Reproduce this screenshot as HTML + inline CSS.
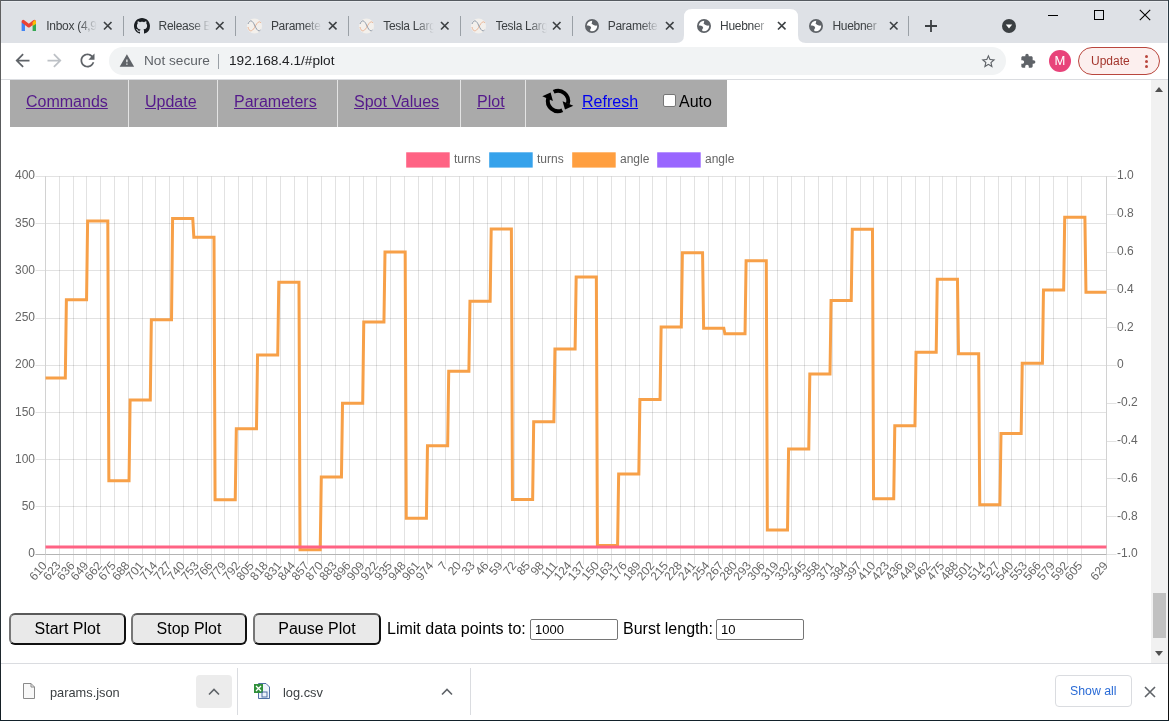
<!DOCTYPE html>
<html><head><meta charset="utf-8">
<style>
html,body{margin:0;padding:0;width:1169px;height:721px;overflow:hidden;background:#fff;}
body{position:relative;font-family:"Liberation Sans",sans-serif;}
.a{position:absolute;}
.tabstrip{left:0;top:0;width:1169px;height:43px;background:#dee1e6;}
.sep{position:absolute;width:1px;background:#9aa0a6;top:16px;height:20px;}
.ttl{position:absolute;top:18px;font-size:12px;letter-spacing:-0.3px;line-height:16px;color:#3c4043;white-space:nowrap;overflow:hidden;}
.ttl span{position:absolute;right:0;top:0;width:18px;height:16px;background:linear-gradient(to right,rgba(222,225,230,0),#dee1e6);}
.x{position:absolute;top:22px;width:9px;height:9px;}
.toolbar{left:0;top:43px;width:1169px;height:36px;background:#fff;}
.omni{left:109px;top:47px;width:897px;height:28px;border-radius:14px;background:#f1f3f4;}
.nav{left:10px;top:80px;width:717px;height:47px;background:#aaaaaa;}
.nav a{position:absolute;top:93px;font-size:16px;line-height:18px;color:#551a8b;text-decoration:underline;white-space:nowrap;}
.nsep{position:absolute;top:80px;height:47px;width:1px;background:#e4e4e4;}
.legtxt{position:absolute;top:152px;font-size:12px;line-height:14px;color:#666;}
.btn{position:absolute;top:613px;height:28px;border:2px solid;border-color:#5a5a5a #111 #111 #777;border-radius:6px;background:#e9e9e9;font-size:16px;line-height:28px;text-align:center;color:#000;box-sizing:content-box;}
.lbl{position:absolute;top:620px;font-size:16px;line-height:18px;color:#000;white-space:nowrap;}
.inp{position:absolute;top:619px;height:19px;border:1px solid #767676;border-radius:2px;background:#fff;font-size:13px;line-height:19px;color:#000;padding-left:4px;box-sizing:content-box;}
.dl{left:0;top:663px;width:1169px;height:57px;background:#fff;border-top:1px solid #dadce0;box-sizing:border-box;}
</style></head><body><div id="wrap" style="position:absolute;left:0;top:0;width:1169px;height:721px;will-change:transform">
<!-- tab strip -->
<div class="a tabstrip"></div>
<!-- active tab -->
<svg class="a" style="left:671px;top:0" width="140" height="44">
<path d="M5 43 Q13 43 13 35 V17 Q13 9 21 9 H119 Q127 9 127 17 V35 Q127 43 135 43 Z" fill="#fff"/>
</svg>
<svg class="a" style="left:21px;top:18px" width="16" height="16" viewBox="0 0 16 16">
<path d="M0.6 4.2 H4 V13 H0.6 Z" fill="#4285f4"/>
<path d="M11.6 4.2 H15 V13 H11.6 Z" fill="#34a853"/>
<path d="M2.3 3.6 L7.8 7.9 L13.3 3.6" stroke="#ea4335" stroke-width="3.3" fill="none" stroke-linejoin="round" stroke-linecap="round"/>
<path d="M11.6 4.4 L13.2 2.2 Q15 2 15 3.8 V6 L11.6 8 Z" fill="#fbbc04"/>
</svg>
<div class="ttl" style="left:46.3px;width:51px">Inbox (4,9<span></span></div>
<svg class="a" style="left:103.1px;top:21.0px" width="9.5" height="9.5"><path d="M1 1 L8.5 8.5 M8.5 1 L1 8.5" stroke="#3c4043" stroke-width="1.65"/></svg>
<div class="sep" style="left:122.9px"></div>
<svg class="a" style="left:134.0px;top:17.8px" width="16" height="16" viewBox="0 0 16 16"><path fill="#1b1f23" d="M8 0C3.58 0 0 3.58 0 8c0 3.54 2.29 6.53 5.47 7.59.4.07.55-.17.55-.38 0-.19-.01-.82-.01-1.49-2.01.37-2.53-.49-2.69-.94-.09-.23-.48-.94-.82-1.13-.28-.15-.68-.52-.01-.53.63-.01 1.08.58 1.23.82.72 1.21 1.870.87 2.33.66.07-.52.28-.87.51-1.07-1.78-.2-3.64-.89-3.64-3.95 0-.87.31-1.59.82-2.15-.08-.2-.36-1.02.08-2.12 0 0 .67-.21 2.2.82.64-.18 1.32-.27 2-.27.68 0 1.36.09 2 .27 1.530-1.04 2.2-.82 2.2-.82.44 1.1.16 1.92.08 2.12.51.56.82 1.27.82 2.15 0 3.07-1.870 3.75-3.65 3.95.29.25.54.73.54 1.48 0 1.07-.01 1.93-.01 2.2 0 .21.15.46.55.38A8.013 8.013 0 0016 8c0-4.42-3.58-8-8-8z"/></svg>
<div class="ttl" style="left:158.6px;width:51px">Release B<span></span></div>
<svg class="a" style="left:215.4px;top:21.0px" width="9.5" height="9.5"><path d="M1 1 L8.5 8.5 M8.5 1 L1 8.5" stroke="#3c4043" stroke-width="1.65"/></svg>
<div class="sep" style="left:235.2px"></div>
<svg class="a" style="left:245.5px;top:17.8px" width="17" height="16" viewBox="0 0 17 16">
<circle cx="8.5" cy="8" r="7.6" fill="#f3f0ec"/>
<path d="M2 9 C3 14 6 14 8.5 9.5 S13 2 15 5" stroke="#e9b08e" stroke-width="0.9" fill="none"/>
<path d="M2 6 C4 1 6.5 2.5 8.5 7 S12.5 14.5 14.5 12" stroke="#8592a3" stroke-width="0.9" fill="none"/>
</svg>
<div class="ttl" style="left:270.9px;width:51px">Paramete<span></span></div>
<svg class="a" style="left:327.7px;top:21.0px" width="9.5" height="9.5"><path d="M1 1 L8.5 8.5 M8.5 1 L1 8.5" stroke="#3c4043" stroke-width="1.65"/></svg>
<div class="sep" style="left:347.5px"></div>
<svg class="a" style="left:357.8px;top:17.8px" width="17" height="16" viewBox="0 0 17 16">
<circle cx="8.5" cy="8" r="7.6" fill="#f3f0ec"/>
<path d="M2 9 C3 14 6 14 8.5 9.5 S13 2 15 5" stroke="#e9b08e" stroke-width="0.9" fill="none"/>
<path d="M2 6 C4 1 6.5 2.5 8.5 7 S12.5 14.5 14.5 12" stroke="#8592a3" stroke-width="0.9" fill="none"/>
</svg>
<div class="ttl" style="left:383.2px;width:51px">Tesla Larg<span></span></div>
<svg class="a" style="left:440.0px;top:21.0px" width="9.5" height="9.5"><path d="M1 1 L8.5 8.5 M8.5 1 L1 8.5" stroke="#3c4043" stroke-width="1.65"/></svg>
<div class="sep" style="left:459.8px"></div>
<svg class="a" style="left:470.1px;top:17.8px" width="17" height="16" viewBox="0 0 17 16">
<circle cx="8.5" cy="8" r="7.6" fill="#f3f0ec"/>
<path d="M2 9 C3 14 6 14 8.5 9.5 S13 2 15 5" stroke="#e9b08e" stroke-width="0.9" fill="none"/>
<path d="M2 6 C4 1 6.5 2.5 8.5 7 S12.5 14.5 14.5 12" stroke="#8592a3" stroke-width="0.9" fill="none"/>
</svg>
<div class="ttl" style="left:495.5px;width:51px">Tesla Larg<span></span></div>
<svg class="a" style="left:552.3px;top:21.0px" width="9.5" height="9.5"><path d="M1 1 L8.5 8.5 M8.5 1 L1 8.5" stroke="#3c4043" stroke-width="1.65"/></svg>
<div class="sep" style="left:572.1px"></div>
<svg class="a" style="left:584.6px;top:19px" width="14" height="14" viewBox="0 0 14 14">
<circle cx="7" cy="7" r="6.1" stroke="#5f6368" stroke-width="1.8" fill="#fff"/>
<path d="M6.6 1.5 C7.8 2.4 6.8 3.8 6.5 4.6 C7.4 5.6 8.6 6.3 9.8 6.6 C11 6.9 11.8 6.6 12.6 6.2 L12.2 3.6 L9.5 1.4 Z" fill="#5f6368"/>
<path d="M1.4 6.8 C2.4 6.2 4.3 6.4 5.3 7.2 C6.2 8 6.6 9.2 5.6 9.8 C4.9 10.3 5.2 11.6 5.6 12.6 L3.2 11.6 L1.4 9.2 Z" fill="#5f6368"/>
</svg>
<div class="ttl" style="left:607.8px;width:51px">Paramete<span></span></div>
<svg class="a" style="left:664.6px;top:21.0px" width="9.5" height="9.5"><path d="M1 1 L8.5 8.5 M8.5 1 L1 8.5" stroke="#3c4043" stroke-width="1.65"/></svg>
<svg class="a" style="left:696.9px;top:19px" width="14" height="14" viewBox="0 0 14 14">
<circle cx="7" cy="7" r="6.1" stroke="#5f6368" stroke-width="1.8" fill="#fff"/>
<path d="M6.6 1.5 C7.8 2.4 6.8 3.8 6.5 4.6 C7.4 5.6 8.6 6.3 9.8 6.6 C11 6.9 11.8 6.6 12.6 6.2 L12.2 3.6 L9.5 1.4 Z" fill="#5f6368"/>
<path d="M1.4 6.8 C2.4 6.2 4.3 6.4 5.3 7.2 C6.2 8 6.6 9.2 5.6 9.8 C4.9 10.3 5.2 11.6 5.6 12.6 L3.2 11.6 L1.4 9.2 Z" fill="#5f6368"/>
</svg>
<div class="ttl" style="left:720.1px;width:51px">Huebner<span style="background:linear-gradient(to right,rgba(255,255,255,0),#fff)"></span></div>
<svg class="a" style="left:776.9px;top:21.0px" width="9.5" height="9.5"><path d="M1 1 L8.5 8.5 M8.5 1 L1 8.5" stroke="#3c4043" stroke-width="1.65"/></svg>
<svg class="a" style="left:809.2px;top:19px" width="14" height="14" viewBox="0 0 14 14">
<circle cx="7" cy="7" r="6.1" stroke="#5f6368" stroke-width="1.8" fill="#fff"/>
<path d="M6.6 1.5 C7.8 2.4 6.8 3.8 6.5 4.6 C7.4 5.6 8.6 6.3 9.8 6.6 C11 6.9 11.8 6.6 12.6 6.2 L12.2 3.6 L9.5 1.4 Z" fill="#5f6368"/>
<path d="M1.4 6.8 C2.4 6.2 4.3 6.4 5.3 7.2 C6.2 8 6.6 9.2 5.6 9.8 C4.9 10.3 5.2 11.6 5.6 12.6 L3.2 11.6 L1.4 9.2 Z" fill="#5f6368"/>
</svg>
<div class="ttl" style="left:832.4px;width:51px">Huebner<span></span></div>
<svg class="a" style="left:889.2px;top:21.0px" width="9.5" height="9.5"><path d="M1 1 L8.5 8.5 M8.5 1 L1 8.5" stroke="#3c4043" stroke-width="1.65"/></svg>
<div class="sep" style="left:908.4px"></div>
<svg class="a" style="left:924px;top:19px" width="14" height="14"><path d="M7 1V13M1 7H13" stroke="#3c4043" stroke-width="1.8"/></svg>
<svg class="a" style="left:1002px;top:19px" width="14" height="14"><circle cx="7" cy="7" r="7" fill="#3c4043"/><path d="M3.8 5.4H10.2L7 9.4Z" fill="#fff"/></svg>
<div class="a" style="left:1048px;top:15px;width:10px;height:1px;background:#000"></div>
<div class="a" style="left:1094px;top:10px;width:8px;height:8px;border:1px solid #000"></div>
<svg class="a" style="left:1139px;top:9px" width="12" height="12"><path d="M0.8 0.8L11.2 11.2M11.2 0.8L0.8 11.2" stroke="#000" stroke-width="1.1"/></svg>
<!-- toolbar -->
<div class="a toolbar"></div>
<div class="a" style="left:0;top:79px;width:1169px;height:1px;background:#dadce0"></div>
<div class="a omni"></div>
<svg class="a" style="left:12.1px;top:49.8px" width="21" height="21" viewBox="0 0 24 24"><path fill="#5f6368" d="M20 11H7.83l5.59-5.59L12 4l-8 8 8 8 1.41-1.41L7.83 13H20v-2z"/></svg>
<svg class="a" style="left:44.3px;top:49.8px" width="21" height="21" viewBox="0 0 24 24"><path fill="#bdc1c6" d="M12 4l-1.41 1.41L16.17 11H4v2h12.17l-5.58 5.59L12 20l8-8z"/></svg>
<svg class="a" style="left:76.5px;top:50.1px" width="21" height="21" viewBox="0 0 24 24"><path fill="#5f6368" d="M17.65 6.35C16.2 4.9 14.21 4 12 4c-4.42 0-7.99 3.58-7.99 8s3.57 8 7.99 8c3.73 0 6.84-2.55 7.730-6h-2.08c-.82 2.33-3.04 4-5.65 4-3.31 0-6-2.69-6-6s2.69-6 6-6c1.66 0 3.14.69 4.22 1.78L13 11h7V4l-2.35 2.35z"/></svg>
<svg class="a" style="left:118.9px;top:53.1px" width="15.8" height="15.8" viewBox="0 0 24 24"><path fill="#5f6368" d="M1 21h22L12 2 1 21zm12-3h-2v-2h2v2zm0-4h-2v-4h2v4z"/></svg>
<div class="a" style="left:144px;top:53.3px;font-size:13.65px;line-height:16px;color:#5f6368;white-space:nowrap">Not secure</div>
<div class="a" style="left:218px;top:54px;width:1px;height:15px;background:#9aa0a6"></div>
<div class="a" style="left:229px;top:53.3px;font-size:13.65px;line-height:16px;color:#202124;white-space:nowrap">192.168.4.1/#plot</div>
<svg class="a" style="left:979.6px;top:53.3px" width="16.8" height="16.8" viewBox="0 0 24 24"><path fill="#5f6368" d="M22 9.24l-7.19-.62L12 2 9.19 8.63 2 9.24l5.46 4.73L5.82 21 12 17.27 18.18 21l-1.63-7.03L22 9.24zM12 15.4l-3.76 2.27 1-4.28-3.32-2.88 4.38-.38L12 6.1l1.71 4.04 4.38.38-3.32 2.88 1 4.28L12 15.4z"/></svg>
<svg class="a" style="left:1019.5px;top:53px" width="16" height="16" viewBox="0 0 24 24"><path fill="#5f6368" d="M20.5 11H19V7c0-1.1-.9-2-2-2h-4V3.5C13 2.12 11.88 1 10.5 1S8 2.12 8 3.5V5H4c-1.1 0-1.99.9-1.99 2v3.8H3.5c1.49 0 2.7 1.21 2.7 2.7s-1.21 2.7-2.7 2.7H2V20c0 1.1.9 2 2 2h3.8v-1.5c0-1.49 1.21-2.7 2.7-2.7 1.49 0 2.7 1.21 2.7 2.7V22H17c1.1 0 2-.9 2-2v-4h1.5c1.38 0 2.5-1.12 2.5-2.5S21.88 11 20.5 11z"/></svg>
<div class="a" style="left:1049px;top:50px;width:22px;height:22px;border-radius:11px;background:#e8437a;color:#fff;font-size:13px;line-height:22px;text-align:center">M</div>
<div class="a" style="left:1078px;top:47px;width:80px;height:26px;border:1px solid #b9463d;border-radius:14px;background:#fcefee"></div>
<div class="a" style="left:1091px;top:53px;font-size:12px;line-height:16px;color:#a3352c;white-space:nowrap">Update</div>
<svg class="a" style="left:1144px;top:54px" width="5" height="16"><circle cx="2.5" cy="2.5" r="1.5" fill="#b9463d"/><circle cx="2.5" cy="7.5" r="1.5" fill="#b9463d"/><circle cx="2.5" cy="12.5" r="1.5" fill="#b9463d"/></svg>
<!-- page -->
<div class="a nav"></div>
<div class="nsep" style="left:128px"></div>
<div class="nsep" style="left:217px"></div>
<div class="nsep" style="left:337px"></div>
<div class="nsep" style="left:460px"></div>
<div class="nsep" style="left:525px"></div>
<div class="nav">
<a style="left:26px">Commands</a>
<a style="left:145px">Update</a>
<a style="left:234px">Parameters</a>
<a style="left:354px">Spot Values</a>
<a style="left:477px">Plot</a>
<a style="left:582px;color:#0000ee">Refresh</a>
</div>
<svg class="a" style="left:538.3px;top:84px" width="40" height="34"><path d="M15.69 7.76 A10.2 10.2 0 0 1 29.85 19.64" stroke="#000" stroke-width="3.9" fill="none"/><path d="M24.6 17.2 L35.3 21.7 L27 25.6 Z" fill="#000"/><path d="M24.31 26.24 A10.2 10.2 0 0 1 10.15 14.36" stroke="#000" stroke-width="3.9" fill="none"/><path d="M4.3 12.3 L12.6 8.4 L14.9 17 Z" fill="#000"/></svg>
<div class="a" style="left:663px;top:94px;width:11px;height:11px;border:1px solid #767676;border-radius:2px;background:#fff"></div>
<div class="a" style="left:679px;top:93px;font-size:16px;line-height:18px;color:#000">Auto</div>
<!-- legend -->
<svg class="a" style="left:0;top:0" width="1169" height="200">
<rect x="407.7" y="153.8" width="40.5" height="12.3" fill="#ff6384" stroke="#ff6384" stroke-width="3"/>
<rect x="490.7" y="153.8" width="40.5" height="12.3" fill="#36a2eb" stroke="#36a2eb" stroke-width="3"/>
<rect x="573.7" y="153.8" width="40.5" height="12.3" fill="#ff9f40" stroke="#ff9f40" stroke-width="3"/>
<rect x="658.7" y="153.8" width="40.5" height="12.3" fill="#9966ff" stroke="#9966ff" stroke-width="3"/>
</svg>
<div class="legtxt" style="left:454px">turns</div>
<div class="legtxt" style="left:537px">turns</div>
<div class="legtxt" style="left:620px">angle</div>
<div class="legtxt" style="left:705px">angle</div>
<svg width="1169" height="721" style="position:absolute;left:0;top:0">
<path d="M45.5 176.5V564.5M59.5 176.5V564.5M73.5 176.5V564.5M86.5 176.5V564.5M100.5 176.5V564.5M114.5 176.5V564.5M128.5 176.5V564.5M142.5 176.5V564.5M155.5 176.5V564.5M169.5 176.5V564.5M183.5 176.5V564.5M197.5 176.5V564.5M211.5 176.5V564.5M224.5 176.5V564.5M238.5 176.5V564.5M252.5 176.5V564.5M266.5 176.5V564.5M280.5 176.5V564.5M294.5 176.5V564.5M307.5 176.5V564.5M321.5 176.5V564.5M335.5 176.5V564.5M349.5 176.5V564.5M363.5 176.5V564.5M376.5 176.5V564.5M390.5 176.5V564.5M404.5 176.5V564.5M418.5 176.5V564.5M432.5 176.5V564.5M445.5 176.5V564.5M459.5 176.5V564.5M473.5 176.5V564.5M487.5 176.5V564.5M501.5 176.5V564.5M514.5 176.5V564.5M528.5 176.5V564.5M542.5 176.5V564.5M556.5 176.5V564.5M570.5 176.5V564.5M583.5 176.5V564.5M597.5 176.5V564.5M611.5 176.5V564.5M625.5 176.5V564.5M639.5 176.5V564.5M652.5 176.5V564.5M666.5 176.5V564.5M680.5 176.5V564.5M694.5 176.5V564.5M708.5 176.5V564.5M722.5 176.5V564.5M735.5 176.5V564.5M749.5 176.5V564.5M763.5 176.5V564.5M777.5 176.5V564.5M791.5 176.5V564.5M804.5 176.5V564.5M818.5 176.5V564.5M832.5 176.5V564.5M846.5 176.5V564.5M860.5 176.5V564.5M873.5 176.5V564.5M887.5 176.5V564.5M901.5 176.5V564.5M915.5 176.5V564.5M929.5 176.5V564.5M942.5 176.5V564.5M956.5 176.5V564.5M970.5 176.5V564.5M984.5 176.5V564.5M998.5 176.5V564.5M1011.5 176.5V564.5M1025.5 176.5V564.5M1039.5 176.5V564.5M1053.5 176.5V564.5M1067.5 176.5V564.5M1081.5 176.5V564.5M1106.5 176.5V564.5" stroke="rgba(0,0,0,0.115)" stroke-width="1" fill="none"/>
<path d="M35.5 176.5H1106.5M35.5 223.5H1106.5M35.5 270.5H1106.5M35.5 318.5H1106.5M35.5 365.5H1106.5M35.5 412.5H1106.5M35.5 459.5H1106.5M35.5 506.5H1106.5M35.5 554.5H1106.5" stroke="rgba(0,0,0,0.115)" stroke-width="1" fill="none"/>
<path d="M1106.5 176.5H1116.5M1106.5 214.5H1116.5M1106.5 252.5H1116.5M1106.5 289.5H1116.5M1106.5 327.5H1116.5M1106.5 365.5H1116.5M1106.5 403.5H1116.5M1106.5 441.5H1116.5M1106.5 478.5H1116.5M1106.5 516.5H1116.5M1106.5 554.5H1116.5" stroke="rgba(0,0,0,0.115)" stroke-width="1" fill="none"/>
<path d="M35.5 554.5H1106.5" stroke="#b4b4b4" stroke-width="1"/>
<path d="M45.5 176.5V554.5" stroke="#d2d2d2" stroke-width="1"/>
<path d="M1106.5 176.5V554.5" stroke="#d2d2d2" stroke-width="1"/>
<g font-family="Liberation Sans, sans-serif" font-size="12" fill="#666"><text x="35" y="179.3" text-anchor="end">400</text><text x="35" y="226.6" text-anchor="end">350</text><text x="35" y="273.8" text-anchor="end">300</text><text x="35" y="321.1" text-anchor="end">250</text><text x="35" y="368.3" text-anchor="end">200</text><text x="35" y="415.6" text-anchor="end">150</text><text x="35" y="462.8" text-anchor="end">100</text><text x="35" y="510.1" text-anchor="end">50</text><text x="35" y="557.3" text-anchor="end">0</text><text x="1117" y="179.3" text-anchor="start">1.0</text><text x="1117" y="217.1" text-anchor="start">0.8</text><text x="1117" y="254.9" text-anchor="start">0.6</text><text x="1117" y="292.7" text-anchor="start">0.4</text><text x="1117" y="330.5" text-anchor="start">0.2</text><text x="1117" y="368.3" text-anchor="start">0</text><text x="1117" y="406.1" text-anchor="start">-0.2</text><text x="1117" y="443.9" text-anchor="start">-0.4</text><text x="1117" y="481.7" text-anchor="start">-0.6</text><text x="1117" y="519.5" text-anchor="start">-0.8</text><text x="1117" y="557.3" text-anchor="start">-1.0</text></g>
<g font-family="Liberation Sans, sans-serif" font-size="12" fill="#666"><text transform="translate(44.50 563.3) rotate(-50)" text-anchor="end" dy="4">610</text><text transform="translate(58.31 563.3) rotate(-50)" text-anchor="end" dy="4">623</text><text transform="translate(72.11 563.3) rotate(-50)" text-anchor="end" dy="4">636</text><text transform="translate(85.92 563.3) rotate(-50)" text-anchor="end" dy="4">649</text><text transform="translate(99.73 563.3) rotate(-50)" text-anchor="end" dy="4">662</text><text transform="translate(113.53 563.3) rotate(-50)" text-anchor="end" dy="4">675</text><text transform="translate(127.34 563.3) rotate(-50)" text-anchor="end" dy="4">688</text><text transform="translate(141.15 563.3) rotate(-50)" text-anchor="end" dy="4">701</text><text transform="translate(154.95 563.3) rotate(-50)" text-anchor="end" dy="4">714</text><text transform="translate(168.76 563.3) rotate(-50)" text-anchor="end" dy="4">727</text><text transform="translate(182.57 563.3) rotate(-50)" text-anchor="end" dy="4">740</text><text transform="translate(196.37 563.3) rotate(-50)" text-anchor="end" dy="4">753</text><text transform="translate(210.18 563.3) rotate(-50)" text-anchor="end" dy="4">766</text><text transform="translate(223.99 563.3) rotate(-50)" text-anchor="end" dy="4">779</text><text transform="translate(237.80 563.3) rotate(-50)" text-anchor="end" dy="4">792</text><text transform="translate(251.60 563.3) rotate(-50)" text-anchor="end" dy="4">805</text><text transform="translate(265.41 563.3) rotate(-50)" text-anchor="end" dy="4">818</text><text transform="translate(279.22 563.3) rotate(-50)" text-anchor="end" dy="4">831</text><text transform="translate(293.02 563.3) rotate(-50)" text-anchor="end" dy="4">844</text><text transform="translate(306.83 563.3) rotate(-50)" text-anchor="end" dy="4">857</text><text transform="translate(320.64 563.3) rotate(-50)" text-anchor="end" dy="4">870</text><text transform="translate(334.44 563.3) rotate(-50)" text-anchor="end" dy="4">883</text><text transform="translate(348.25 563.3) rotate(-50)" text-anchor="end" dy="4">896</text><text transform="translate(362.06 563.3) rotate(-50)" text-anchor="end" dy="4">909</text><text transform="translate(375.86 563.3) rotate(-50)" text-anchor="end" dy="4">922</text><text transform="translate(389.67 563.3) rotate(-50)" text-anchor="end" dy="4">935</text><text transform="translate(403.48 563.3) rotate(-50)" text-anchor="end" dy="4">948</text><text transform="translate(417.28 563.3) rotate(-50)" text-anchor="end" dy="4">961</text><text transform="translate(431.09 563.3) rotate(-50)" text-anchor="end" dy="4">974</text><text transform="translate(444.90 563.3) rotate(-50)" text-anchor="end" dy="4">7</text><text transform="translate(458.70 563.3) rotate(-50)" text-anchor="end" dy="4">20</text><text transform="translate(472.51 563.3) rotate(-50)" text-anchor="end" dy="4">33</text><text transform="translate(486.32 563.3) rotate(-50)" text-anchor="end" dy="4">46</text><text transform="translate(500.12 563.3) rotate(-50)" text-anchor="end" dy="4">59</text><text transform="translate(513.93 563.3) rotate(-50)" text-anchor="end" dy="4">72</text><text transform="translate(527.74 563.3) rotate(-50)" text-anchor="end" dy="4">85</text><text transform="translate(541.55 563.3) rotate(-50)" text-anchor="end" dy="4">98</text><text transform="translate(555.35 563.3) rotate(-50)" text-anchor="end" dy="4">111</text><text transform="translate(569.16 563.3) rotate(-50)" text-anchor="end" dy="4">124</text><text transform="translate(582.97 563.3) rotate(-50)" text-anchor="end" dy="4">137</text><text transform="translate(596.77 563.3) rotate(-50)" text-anchor="end" dy="4">150</text><text transform="translate(610.58 563.3) rotate(-50)" text-anchor="end" dy="4">163</text><text transform="translate(624.39 563.3) rotate(-50)" text-anchor="end" dy="4">176</text><text transform="translate(638.19 563.3) rotate(-50)" text-anchor="end" dy="4">189</text><text transform="translate(652.00 563.3) rotate(-50)" text-anchor="end" dy="4">202</text><text transform="translate(665.81 563.3) rotate(-50)" text-anchor="end" dy="4">215</text><text transform="translate(679.61 563.3) rotate(-50)" text-anchor="end" dy="4">228</text><text transform="translate(693.42 563.3) rotate(-50)" text-anchor="end" dy="4">241</text><text transform="translate(707.23 563.3) rotate(-50)" text-anchor="end" dy="4">254</text><text transform="translate(721.03 563.3) rotate(-50)" text-anchor="end" dy="4">267</text><text transform="translate(734.84 563.3) rotate(-50)" text-anchor="end" dy="4">280</text><text transform="translate(748.65 563.3) rotate(-50)" text-anchor="end" dy="4">293</text><text transform="translate(762.45 563.3) rotate(-50)" text-anchor="end" dy="4">306</text><text transform="translate(776.26 563.3) rotate(-50)" text-anchor="end" dy="4">319</text><text transform="translate(790.07 563.3) rotate(-50)" text-anchor="end" dy="4">332</text><text transform="translate(803.87 563.3) rotate(-50)" text-anchor="end" dy="4">345</text><text transform="translate(817.68 563.3) rotate(-50)" text-anchor="end" dy="4">358</text><text transform="translate(831.49 563.3) rotate(-50)" text-anchor="end" dy="4">371</text><text transform="translate(845.29 563.3) rotate(-50)" text-anchor="end" dy="4">384</text><text transform="translate(859.10 563.3) rotate(-50)" text-anchor="end" dy="4">397</text><text transform="translate(872.91 563.3) rotate(-50)" text-anchor="end" dy="4">410</text><text transform="translate(886.72 563.3) rotate(-50)" text-anchor="end" dy="4">423</text><text transform="translate(900.52 563.3) rotate(-50)" text-anchor="end" dy="4">436</text><text transform="translate(914.33 563.3) rotate(-50)" text-anchor="end" dy="4">449</text><text transform="translate(928.14 563.3) rotate(-50)" text-anchor="end" dy="4">462</text><text transform="translate(941.94 563.3) rotate(-50)" text-anchor="end" dy="4">475</text><text transform="translate(955.75 563.3) rotate(-50)" text-anchor="end" dy="4">488</text><text transform="translate(969.56 563.3) rotate(-50)" text-anchor="end" dy="4">501</text><text transform="translate(983.36 563.3) rotate(-50)" text-anchor="end" dy="4">514</text><text transform="translate(997.17 563.3) rotate(-50)" text-anchor="end" dy="4">527</text><text transform="translate(1010.98 563.3) rotate(-50)" text-anchor="end" dy="4">540</text><text transform="translate(1024.78 563.3) rotate(-50)" text-anchor="end" dy="4">553</text><text transform="translate(1038.59 563.3) rotate(-50)" text-anchor="end" dy="4">566</text><text transform="translate(1052.40 563.3) rotate(-50)" text-anchor="end" dy="4">579</text><text transform="translate(1066.20 563.3) rotate(-50)" text-anchor="end" dy="4">592</text><text transform="translate(1080.01 563.3) rotate(-50)" text-anchor="end" dy="4">605</text><text transform="translate(1105.50 563.3) rotate(-50)" text-anchor="end" dy="4">629</text></g>
<polyline points="45.50,378.07 65.32,378.07 66.38,299.73 86.56,299.73 87.62,220.92 107.80,220.92 108.86,480.79 129.04,480.79 130.10,399.99 150.28,399.99 151.35,319.67 171.52,319.67 172.59,218.55 192.77,218.55 193.83,237.17 214.01,237.17 215.07,499.69 235.25,499.69 236.31,428.81 256.49,428.81 257.55,355.11 277.73,355.11 278.79,282.34 298.97,282.34 300.03,549.77 320.21,549.77 321.28,477.01 341.45,477.01 342.52,403.30 362.70,403.30 363.76,322.03 383.94,322.03 385.00,252.10 405.18,252.10 406.24,518.31 426.42,518.31 427.48,445.82 447.66,445.82 448.72,371.17 468.90,371.17 469.96,301.24 490.14,301.24 491.20,228.95 511.38,228.95 512.45,499.41 532.63,499.41 533.69,421.73 553.87,421.73 554.93,349.06 575.11,349.06 576.17,276.95 596.35,276.95 597.41,545.43 617.59,545.43 618.65,473.89 638.83,473.89 639.89,399.52 660.07,399.52 661.13,326.94 681.31,326.94 682.38,252.86 702.56,252.86 703.62,328.27 723.80,328.27 724.86,333.84 745.04,333.84 746.10,260.79 766.28,260.79 767.34,529.93 787.52,529.93 788.58,448.94 808.76,448.94 809.82,374.00 830.00,374.00 831.06,300.39 851.24,300.39 852.31,229.14 872.49,229.14 873.55,498.75 893.73,498.75 894.79,425.79 914.97,425.79 916.03,352.27 936.21,352.27 937.27,279.13 957.45,279.13 958.51,353.69 978.69,353.69 979.75,504.79 999.93,504.79 1000.99,433.54 1021.17,433.54 1022.24,363.33 1042.42,363.33 1043.48,289.90 1063.66,289.90 1064.72,217.13 1084.90,217.13 1085.96,292.26 1106.50,292.26" stroke="#f7a048" stroke-width="3" fill="none" stroke-linejoin="miter"/>
<path d="M45.5 546.9H1106.5" stroke="#ff6384" stroke-width="3" fill="none"/>
</svg>
<!-- controls -->
<div class="btn" style="left:9px;width:113px">Start Plot</div>
<div class="btn" style="left:131px;width:112px">Stop Plot</div>
<div class="btn" style="left:253px;width:124px">Pause Plot</div>
<div class="lbl" style="left:387px">Limit data points to:</div>
<div class="inp" style="left:530px;width:82px">1000</div>
<div class="lbl" style="left:623px">Burst length:</div>
<div class="inp" style="left:716px;width:82px">10</div>
<!-- scrollbar -->
<div class="a" style="left:1151px;top:80px;width:17px;height:583px;background:#f1f1f1"></div>
<div class="a" style="left:1153px;top:593px;width:13px;height:45px;background:#c1c1c1"></div>
<svg class="a" style="left:1151px;top:80px" width="16" height="583">
<path d="M4 12 L8 7 L12 12 Z" fill="#505050"/>
<path d="M4 571 L8 576 L12 571 Z" fill="#505050"/>
</svg>
<!-- download shelf -->
<div class="a dl"></div>
<svg class="a" style="left:22px;top:683px" width="14" height="17"><path d="M1.5 0.5H9L12.5 4V15.5H1.5Z" fill="#f8f8f8" stroke="#8a8a8a" stroke-width="1"/><path d="M9 0.5V4H12.5" fill="none" stroke="#8a8a8a" stroke-width="1"/></svg>
<div class="a" style="left:50px;top:685px;font-size:12.8px;line-height:16px;color:#3c4043;white-space:nowrap">params.json</div>
<div class="a" style="left:196px;top:675px;width:36px;height:33px;border-radius:4px;background:#ececec"></div>
<svg class="a" style="left:208px;top:688px" width="12" height="8"><path d="M1 6.5L6 1.5L11 6.5" stroke="#5f6368" stroke-width="1.6" fill="none"/></svg>
<div class="a" style="left:237px;top:668px;width:1px;height:47px;background:#dadce0"></div>
<svg class="a" style="left:253px;top:682px" width="18" height="18"><path d="M5.5 1.5H13L16.5 5V16.5H5.5Z" fill="#eef3fb" stroke="#4f6fa5" stroke-width="1"/><rect x="1" y="2" width="9" height="9" fill="#2f8f3a"/><path d="M3 4L8 9M8 4L3 9" stroke="#fff" stroke-width="1.3"/><rect x="9" y="10" width="5" height="5" fill="none" stroke="#4f6fa5" stroke-width="1"/></svg>
<div class="a" style="left:283px;top:685px;font-size:12.8px;line-height:16px;color:#3c4043;white-space:nowrap">log.csv</div>
<svg class="a" style="left:441px;top:688px" width="12" height="8"><path d="M1 6.5L6 1.5L11 6.5" stroke="#5f6368" stroke-width="1.6" fill="none"/></svg>
<div class="a" style="left:470px;top:668px;width:1px;height:47px;background:#dadce0"></div>
<div class="a" style="left:1055px;top:675px;width:75px;height:30px;border:1px solid #dadce0;border-radius:4px;background:#fff"></div>
<div class="a" style="left:1070px;top:683px;font-size:12.3px;line-height:16px;color:#2a6bd6;white-space:nowrap">Show all</div>
<svg class="a" style="left:1144px;top:686px" width="12" height="12"><path d="M1 1 L11 11 M11 1 L1 11" stroke="#5f6368" stroke-width="1.6"/></svg>
<!-- window border -->
<div class="a" style="left:0;top:1px;width:1169px;height:1px;background:#e9ecf0"></div>
<div class="a" style="left:1167px;top:1px;width:1px;height:42px;background:#e9ecf0"></div>
<div class="a" style="left:0;top:0;width:1169px;height:1px;background:#555a60"></div>
<div class="a" style="left:0;top:0;width:1px;height:721px;background:linear-gradient(#606060,#4a4f54 60%,#111c22)"></div>
<div class="a" style="left:1168px;top:0;width:1px;height:721px;background:linear-gradient(#2a3a44,#111)"></div>
<div class="a" style="left:0;top:720px;width:1169px;height:1px;background:#13222b"></div>
</div></body></html>
